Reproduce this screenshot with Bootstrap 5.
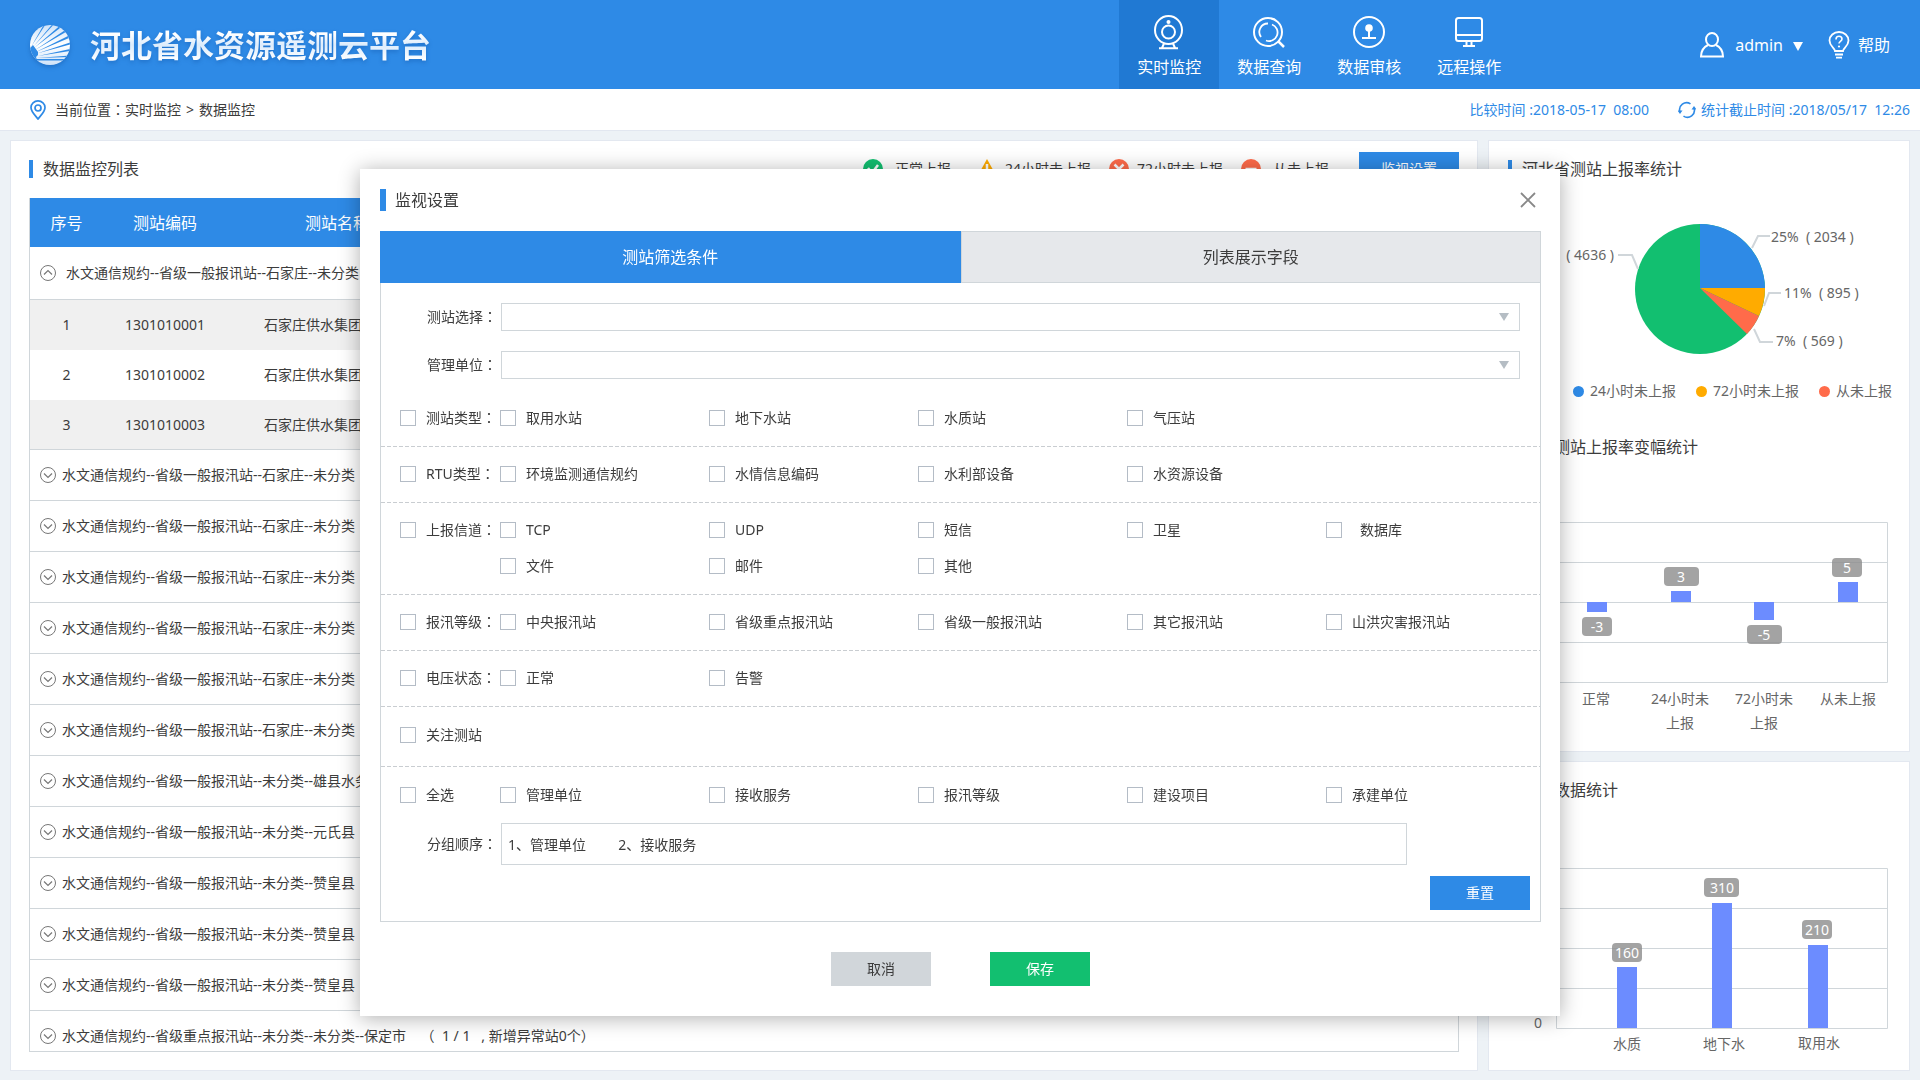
<!DOCTYPE html>
<html lang="zh-CN">
<head>
<meta charset="utf-8">
<meta name="viewport" content="width=device-width, initial-scale=1">
<title>河北省水资源遥测云平台</title>
<link href="https://cdn.jsdelivr.net/npm/bootstrap@5.3.0/dist/css/bootstrap.min.css" rel="stylesheet">
<style>
:root{--blue:#2e8ae6;--line:#d0d6da;--ink:#3c3c3c;--soft:#666}
body{font-family:"Noto Sans","Noto Sans CJK SC",sans-serif;font-size:14px;line-height:20px;color:var(--ink);background:#edf2f6;height:100vh;min-height:700px;overflow:hidden}
svg{display:block;flex:none}
button{font-family:inherit}
.colon{font-family:"Noto Sans CJK TC",sans-serif;line-height:1}
/* header */
.topbar{background:var(--blue);color:#fff;height:89px}
.brand{padding-left:30px;gap:20px}
.brand-name{font-size:31px;line-height:44px;font-weight:700;background:linear-gradient(#fff 25%,#dcecfc 50%,#fff 85%);-webkit-background-clip:text;background-clip:text;color:transparent;filter:drop-shadow(0 2px 2px rgba(10,70,150,.35))}
.brand svg{filter:drop-shadow(0 2px 2px rgba(10,70,150,.35))}
.top-link{width:100px;height:89px;padding-top:14px;color:#fff;font-size:16px;line-height:24px;text-decoration:none;gap:5px}
.top-link:hover{color:#fff}
.top-link.active{background:#2079d3}
.user-area{font-size:16px;line-height:24px;margin-left:180px;padding-right:30px;gap:25px}
.user-area a,.user-area button{color:#fff;text-decoration:none;background:none;border:0;padding:0}
.user-area button{gap:10px}
.user-area a{gap:8px}
.subbar{background:#fff;height:42px;border-bottom:1px solid #e2e7f0;padding:0 10px 0 30px;gap:9px}
.crumbs a,.crumbs span{color:var(--ink);text-decoration:none}
.crumbs .sep{margin:0 5px}
.times{color:var(--blue)}
.times svg{margin:0 5px 0 29px}
/* panels */
.page-main{gap:10px;padding:9px 10px;min-height:0}
.panel{background:#fff;border:1px solid #e3e8f0}
.side-col{width:422px;gap:9px}
.bar-title{display:flex;align-items:center;font-size:16px;line-height:24px;margin:0;font-weight:400;gap:10px}
.bar-title::before{content:"";width:4px;height:18px;background:var(--blue)}
.list-panel{padding:11px 18px 18px}
.side-panel{padding:16px 0 0}
.side-panel .bar-title{padding-left:19px}
.pie-legend + .bar-title{margin-top:34px}
.btn-flat{border:0;border-radius:0;width:100px;height:34px;font-size:14px;line-height:20px;padding:0;color:#fff}
.btn-blue,.btn-blue:hover{background:var(--blue);color:#fff}
.btn-grey,.btn-grey:hover{background:#d1d6da;color:var(--ink)}
.btn-green,.btn-green:hover{background:#12bf70;color:#fff}
.states{gap:18px;margin-right:30px}
.states .st{display:flex;align-items:center;gap:8px}
.states .st.short{gap:12px}
/* station table */
.table-wrap{margin-top:12px;border:1px solid var(--line);border-top:0;overflow:hidden;min-height:0}
.stations{width:100%;border-collapse:separate;border-spacing:0;table-layout:fixed;white-space:nowrap}
.stations th{height:49px;background:var(--blue);color:#fff;font-size:16px;font-weight:400;text-align:center;padding:0}
.stations td{padding:0;text-align:center}
.stations .grp td{height:51px;border-bottom:1px solid var(--line);text-align:left;padding-left:9px}
.stations .grp.open td{height:53px}
.stations .grp div{display:flex;align-items:center;gap:5px}
.stations .grp.open div{gap:9px}
.stations .grp button{border:0;background:none;padding:0;color:#777}
.stations .item td{height:50px}
.stations .item.odd td{background:#f0f0f0}
.stations .item.last td{border-bottom:1px solid var(--line)}
.stations .item td.name{text-align:left;padding-left:37px}
.c-no{width:73px}
.c-code{width:124px}
.c-name{width:220px}
/* legend */
.pie-legend{color:var(--soft);gap:20px;padding-right:17px}
.pie-legend span{display:flex;align-items:center;gap:6px;white-space:nowrap}
.pie-legend i{width:11px;height:11px;border-radius:50%}
.pie-legend .late24{background:#2e8ae6}
.pie-legend .late72{background:#ffab00}
.pie-legend .never{background:#ff6b4a}
.chart{width:100%;height:auto}
.chart text{font-size:14px;fill:var(--soft)}
.chart .tag{fill:#fff;text-anchor:middle}
.chart .mid{text-anchor:middle}
/* dialog */
.monitor-modal .modal-dialog{max-width:1200px;margin:169px auto 0}
.monitor-modal .modal-content{border:0;border-radius:0;box-shadow:0 2px 20px rgba(0,0,0,.32);padding:19px 19px 30px 20px;color:var(--ink)}
.dlg-title{gap:9px}
.dlg-title::before{width:6px;height:22px}
.dlg-close{border:0;background:none;padding:0;margin-right:5px}
.dlg-tabs{margin-top:19px}
.dlg-tabs button{flex:1;height:52px;border:1px solid var(--line);background:#e6e8eb;color:var(--ink);font-size:16px;line-height:24px;padding:0}
.dlg-tabs button.active{background:var(--blue);border-color:var(--blue);color:#fff}
.dlg-box{border:1px solid var(--line);border-top:0;padding:20px 0 11px}
.field-row{display:grid;grid-template-columns:74px 1fr;align-items:center;padding:0 20px 0 46px}
.field-row label{height:20px;white-space:nowrap}
.field-row select{height:28px;border:1px solid var(--line);border-radius:0;padding:0 10px;font-size:14px;background:#fff url("data:image/svg+xml,%3Csvg xmlns='http://www.w3.org/2000/svg' width='10' height='8'%3E%3Cpath d='M0 0h10L5 8z' fill='%23b5bdc4'/%3E%3C/svg%3E") no-repeat right 10px center;background-size:10px 8px}
.order-row{padding-right:133px}
.order-row input{height:42px;border:1px solid var(--line);border-radius:0;padding:0 6px;font-size:14px;color:var(--ink)}
.selects{gap:20px;margin-bottom:12px}
.opts{display:grid;grid-template-columns:100px 209fr 209fr 209fr 199fr 204fr;row-gap:16px;padding:17px 10px 19px 19px;background:repeating-linear-gradient(90deg,#c9cdd1 0 4px,transparent 4px 6px) no-repeat left bottom/100% 1px}
.opts.watch{padding:18px 10px 22px 19px}
.opts.all{padding:18px 10px 18px 19px;background:none}
.opts label{display:flex;align-items:center;gap:10px;height:20px;white-space:nowrap}
.opts .form-check-input{width:16px;height:16px;margin:0;border:1px solid #b4bcc6;border-radius:0;flex:none}
.opts .second{grid-column-start:2}
.reset-row{padding:11px 10px 0 0}
.dlg-foot{gap:59px;margin-top:30px}
</style>
<script src="https://cdn.jsdelivr.net/npm/bootstrap@5.3.0/dist/js/bootstrap.bundle.min.js"></script>
</head>
<body class="d-flex flex-column">
<svg width="0" height="0" class="position-absolute" aria-hidden="true">
  <symbol id="down" viewBox="0 0 18 18"><circle cx="9" cy="9" r="7.5" fill="none" stroke="currentColor"/><path d="M5 7.500l4 4 4-4" fill="none" stroke="currentColor" stroke-width="1.200"/></symbol>
  <symbol id="up" viewBox="0 0 18 18"><circle cx="9" cy="9" r="7.5" fill="none" stroke="currentColor"/><path d="M5 10.500l4-4 4 4" fill="none" stroke="currentColor" stroke-width="1.200"/></symbol>
</svg>

<header class="topbar d-flex align-items-center flex-shrink-0">
  <div class="brand d-flex align-items-center me-auto">
    <svg width="40" height="40" viewBox="0 0 40 40">
      <defs><linearGradient id="lg" x1="0" y1="0" x2="0" y2="1"><stop offset="0" stop-color="#cfe3f9"/><stop offset=".5" stop-color="#fff"/><stop offset="1" stop-color="#cfe3f9"/></linearGradient><clipPath id="cc"><circle cx="20" cy="20" r="20"/></clipPath></defs>
      <g clip-path="url(#cc)"><rect width="40" height="40" fill="url(#lg)"/>
      <g fill="#2e8ae6"><path d="M-1 24L3 20 8 27 8 30 6 32 7 35-1 38z"/><path d="M1 22L14.200-1 15.800-1z"/><path d="M3 22L22.500-1 24.200-1z"/><path d="M4 23L29.500 1 31 2.200z"/><path d="M5 25L34.500 5.500 35.800 7z"/><path d="M6 27L38 11 39 13z"/><path d="M7 28.500L40 17.500 40 19.500z"/><path d="M8 31L40 24 40 26z"/><path d="M7 33L40 30.500 40 32z"/><path d="M6 34h34v1.600H6z"/></g></g>
    </svg>
    <span class="brand-name">河北省水资源遥测云平台</span>
  </div>
  <nav class="d-flex">
    <a href="#" class="top-link active d-flex flex-column align-items-center">
      <svg width="36" height="36" viewBox="0 0 36 36" fill="none" stroke="#fff" stroke-width="2"><ellipse cx="17.500" cy="16" rx="13.500" ry="14"/><circle cx="17.500" cy="18" r="6.500"/><circle cx="17.500" cy="8" r="2" fill="#fff" stroke="none"/><path d="M13 29.500l-2 4.500M22 29.500l2 4.500M8 34.300h19"/></svg>实时监控</a>
    <a href="#" class="top-link d-flex flex-column align-items-center">
      <svg width="36" height="36" viewBox="0 0 36 36" fill="none" stroke="#fff" stroke-width="2"><circle cx="17" cy="18" r="14"/><path d="M27 27l6 6" stroke-width="2.500"/><path d="M17 9.500a8.500 8.500 0 0 0-7 13.500M21 10.500a8.500 8.500 0 0 1-6 16" stroke-width="1.800"/></svg>数据查询</a>
    <a href="#" class="top-link d-flex flex-column align-items-center">
      <svg width="36" height="36" viewBox="0 0 36 36" fill="none" stroke="#fff" stroke-width="2"><circle cx="18" cy="18" r="15"/><circle cx="18" cy="14" r="3.800" fill="#fff" stroke="none"/><path d="M18 15v9M11 24h14"/></svg>数据审核</a>
    <a href="#" class="top-link d-flex flex-column align-items-center">
      <svg width="36" height="36" viewBox="0 0 36 36" fill="none" stroke="#fff" stroke-width="2"><rect x="5" y="4" width="26" height="23" rx="2.500"/><path d="M5 21h26M15.500 27v4.500M20.500 27v4.500M12 32h12"/></svg>远程操作</a>
  </nav>
  <div class="user-area d-flex align-items-center">
    <button type="button" class="d-flex align-items-center">
      <svg width="26" height="26" viewBox="0 0 26 26" fill="none" stroke="#fff" stroke-width="2"><ellipse cx="13" cy="7.500" rx="6" ry="6.500"/><path d="M9 13C4 15.500 2 19 2 24.500h22C24 19 22 15.500 17 13"/></svg>
      admin
      <svg class="mt-1" width="10" height="9" viewBox="0 0 10 9"><path d="M0 0h10L5 9z" fill="#fff"/></svg>
    </button>
    <a href="#" class="d-flex align-items-center">
      <svg width="22" height="28" viewBox="0 0 22 28" fill="none" stroke="#fff" stroke-width="1.800"><path d="M7 20c0-3-5.500-4.500-5.500-10.500a9.500 8.500 0 0 1 19 0C20.500 15.500 15 17 15 20z"/><path d="M7 23.500h8M8 26.700h6"/><path d="M8 8.500c0-4.500 6-4 6-.5 0 2.300-3 2.300-3 4.500" stroke-width="1.600"/><circle cx="11" cy="15.500" r="1.100" fill="#fff" stroke="none"/></svg>帮助</a>
  </div>
</header>

<div class="subbar d-flex align-items-center flex-shrink-0">
  <svg width="16" height="20" viewBox="0 0 16 20" fill="none" stroke="#2e8ae6" stroke-width="1.700"><path d="M8 19C5.500 15.500 1 12 1 7.500a7 6.600 0 0 1 14 0C15 12 10.500 15.500 8 19z"/><circle cx="8" cy="8" r="3"/></svg>
  <div class="crumbs me-auto"><span>当前位置<span class="colon" lang="zh-TW">：</span></span><a href="#">实时监控</a><span class="sep">&gt;</span><a href="#">数据监控</a></div>
  <div class="times d-flex align-items-center">
    <span>比较时间 :2018-05-17&nbsp; 08:00</span>
    <svg width="18" height="18" viewBox="0 0 18 18" fill="none" stroke="#2e8ae6" stroke-width="1.600"><path d="M2 11A7 7 0 0 1 12.500 2.900M5.500 15.100A7 7 0 0 0 16 7"/><path d="M-.5 9.500h5L2 13zM13.500 8.500h5L16 5z" fill="#2e8ae6" stroke="none"/></svg>
    <span>统计截止时间 :2018/05/17&nbsp; 12:26</span>
  </div>
</div>

<main class="page-main d-flex flex-grow-1">
  <section class="panel list-panel d-flex flex-column flex-grow-1">
    <div class="d-flex align-items-center">
      <h2 class="bar-title me-auto">数据监控列表</h2>
      <div class="states d-flex">
        <span class="st short me-2"><svg width="20" height="20" viewBox="0 0 20 20"><circle cx="10" cy="10" r="10" fill="#12bf70"/><path d="M5 9l4 5 6-8" fill="none" stroke="#fff" stroke-width="2.500"/></svg>正常上报</span>
        <span class="st"><svg width="20" height="20" viewBox="0 0 20 20"><path d="M10 0l10 18H0z" fill="#ffab00"/><path d="M10 5v8M10 15v2" stroke="#fff" stroke-width="2.500"/></svg>24小时未上报</span>
        <span class="st"><svg width="20" height="20" viewBox="0 0 20 20"><circle cx="10" cy="10" r="10" fill="#ff6b4a"/><path d="M5.500 5.500l9 9M14.500 5.500l-9 9" stroke="#fff" stroke-width="2.500"/></svg>72小时未上报</span>
        <span class="st short"><svg width="20" height="20" viewBox="0 0 20 20"><circle cx="10" cy="10" r="10" fill="#ff6b4a"/><path d="M4.500 10h11" stroke="#fff" stroke-width="2.500"/></svg>从未上报</span>
      </div>
      <button type="button" class="btn btn-flat btn-blue">监视设置</button>
    </div>
    <div class="table-wrap flex-grow-1">
      <table class="stations">
        <colgroup><col class="c-no"><col class="c-code"><col class="c-name"><col></colgroup>
        <thead><tr><th>序号</th><th>测站编码</th><th>测站名称</th><th></th></tr></thead>
        <tbody>
        <tr class="grp open"><td colspan="4"><div><button type="button" aria-label="收起"><svg width="18" height="18"><use href="#up"/></svg></button>水文通信规约--省级一般报讯站--石家庄--未分类</div></td></tr>
        <tr class="item odd"><td>1</td><td>1301010001</td><td class="name">石家庄供水集团</td><td></td></tr>
        <tr class="item"><td>2</td><td>1301010002</td><td class="name">石家庄供水集团</td><td></td></tr>
        <tr class="item odd last"><td>3</td><td>1301010003</td><td class="name">石家庄供水集团</td><td></td></tr>
        <tr class="grp"><td colspan="4"><div><button type="button" aria-label="展开"><svg width="18" height="18"><use href="#down"/></svg></button>水文通信规约--省级一般报汛站--石家庄--未分类</div></td></tr>
        <tr class="grp"><td colspan="4"><div><button type="button" aria-label="展开"><svg width="18" height="18"><use href="#down"/></svg></button>水文通信规约--省级一般报汛站--石家庄--未分类</div></td></tr>
        <tr class="grp"><td colspan="4"><div><button type="button" aria-label="展开"><svg width="18" height="18"><use href="#down"/></svg></button>水文通信规约--省级一般报汛站--石家庄--未分类</div></td></tr>
        <tr class="grp"><td colspan="4"><div><button type="button" aria-label="展开"><svg width="18" height="18"><use href="#down"/></svg></button>水文通信规约--省级一般报汛站--石家庄--未分类</div></td></tr>
        <tr class="grp"><td colspan="4"><div><button type="button" aria-label="展开"><svg width="18" height="18"><use href="#down"/></svg></button>水文通信规约--省级一般报汛站--石家庄--未分类</div></td></tr>
        <tr class="grp"><td colspan="4"><div><button type="button" aria-label="展开"><svg width="18" height="18"><use href="#down"/></svg></button>水文通信规约--省级一般报汛站--石家庄--未分类</div></td></tr>
        <tr class="grp"><td colspan="4"><div><button type="button" aria-label="展开"><svg width="18" height="18"><use href="#down"/></svg></button>水文通信规约--省级一般报汛站--未分类--雄县水务局</div></td></tr>
        <tr class="grp"><td colspan="4"><div><button type="button" aria-label="展开"><svg width="18" height="18"><use href="#down"/></svg></button>水文通信规约--省级一般报汛站--未分类--元氏县</div></td></tr>
        <tr class="grp"><td colspan="4"><div><button type="button" aria-label="展开"><svg width="18" height="18"><use href="#down"/></svg></button>水文通信规约--省级一般报汛站--未分类--赞皇县</div></td></tr>
        <tr class="grp"><td colspan="4"><div><button type="button" aria-label="展开"><svg width="18" height="18"><use href="#down"/></svg></button>水文通信规约--省级一般报汛站--未分类--赞皇县</div></td></tr>
        <tr class="grp"><td colspan="4"><div><button type="button" aria-label="展开"><svg width="18" height="18"><use href="#down"/></svg></button>水文通信规约--省级一般报汛站--未分类--赞皇县</div></td></tr>
        <tr class="grp"><td colspan="4"><div><button type="button" aria-label="展开"><svg width="18" height="18"><use href="#down"/></svg></button><span>水文通信规约--省级重点报汛站--未分类--未分类--保定市&nbsp;&nbsp;&nbsp;&nbsp;（&nbsp; 1 / 1 &nbsp;&nbsp;, 新增异常站0个）</span></div></td></tr>
        </tbody>
      </table>
    </div>
  </section>

  <aside class="side-col d-flex flex-column flex-shrink-0">
    <section class="panel side-panel flex-grow-1">
      <h2 class="bar-title">河北省测站上报率统计</h2>
      <svg class="chart" viewBox="0 0 420 200" role="img" aria-label="测站上报率饼图">
        <!-- centre 211,108 radius 65 -->
        <circle cx="211" cy="108" r="65" fill="#12bf70"/>
        <path d="M211 107V43A65 65 0 0 1 276 107z" fill="#2e8ae6"/>
        <path d="M211 107H276A65 65 0 0 1 270 135z" fill="#ffab00"/>
        <path d="M211 107L270 135A65 65 0 0 1 258 153z" fill="#ff6b4a"/>
        <g fill="none" stroke="#d0d6da" stroke-width="2"><path d="M129 74h14l6 14M281 55h-12l-6 12M292 112h-12l-5 13M284 161h-13l-6-13"/></g>
        <text x="125" y="79" text-anchor="end">57%&nbsp; ( 4636 )</text>
        <text x="282" y="61">25%&nbsp; ( 2034 )</text>
        <text x="295" y="117">11%&nbsp; ( 895 )</text>
        <text x="287" y="165">7%&nbsp; ( 569 )</text>
      </svg>
      <div class="pie-legend d-flex justify-content-end">
        <span><i class="late24"></i>24小时未上报</span>
        <span><i class="late72"></i>72小时未上报</span>
        <span><i class="never"></i>从未上报</span>
      </div>
      <h2 class="bar-title">河北测站上报率变幅统计</h2>
      <svg class="chart" viewBox="0 0 420 280" role="img" aria-label="上报率变幅柱状图">
        <!-- zero line at y=143, 40px per gridline -->
        <path d="M67.500 63.500h331v160h-331zM67 103.500h331M67 143.500h331M67 183.500h331" fill="none" stroke="#d0d6da"/>
        <g fill="#6c8cff"><path d="M98 143h20v10H98zM182 132h20v11h-20zM265 143h20v18h-20zM349 123h20v20h-20z"/></g>
        <g fill="#8c8c8c" fill-opacity=".8"><rect x="93" y="158" width="30" height="19" rx="4"/><rect x="175" y="108" width="35" height="19" rx="4"/><rect x="258" y="166" width="35" height="19" rx="4"/><rect x="343" y="99" width="30" height="19" rx="4"/></g>
        <text class="tag" x="108" y="173">-3</text><text class="tag" x="192" y="123">3</text><text class="tag" x="275" y="181">-5</text><text class="tag" x="358" y="114">5</text>
        <text class="mid" x="107" y="245">正常</text>
        <text class="mid" x="191" y="245">24小时未</text><text class="mid" x="191" y="269">上报</text>
        <text class="mid" x="275" y="245">72小时未</text><text class="mid" x="275" y="269">上报</text>
        <text class="mid" x="359" y="245">从未上报</text>
      </svg>
    </section>
    <section class="panel side-panel">
      <h2 class="bar-title">测站数据统计</h2>
      <svg class="chart" viewBox="0 0 420 268" role="img" aria-label="测站数据柱状图">
        <path d="M67.500 66.500h331v160h-331zM67 106.500h331M67 146.500h331M67 186.500h331" fill="none" stroke="#d0d6da"/>
        <g fill="#6c8cff"><path d="M128 165h20v61h-20zM223 101h20v125h-20zM319 143h20v83h-20z"/></g>
        <g fill="#8c8c8c" fill-opacity=".8"><rect x="123" y="141" width="30" height="19" rx="4"/><rect x="215" y="76" width="35" height="19" rx="4"/><rect x="313" y="118" width="30" height="19" rx="4"/></g>
        <text class="tag" x="138" y="156">160</text><text class="tag" x="233" y="91">310</text><text class="tag" x="328" y="133">210</text>
        <text x="45" y="226">0</text>
        <text class="mid" x="138" y="247">水质</text><text class="mid" x="235" y="247">地下水</text><text class="mid" x="330" y="246">取用水</text>
      </svg>
    </section>
  </aside>
</main>

<div class="modal monitor-modal d-block" tabindex="-1" role="dialog" aria-labelledby="dlgTitle">
  <div class="modal-dialog">
    <div class="modal-content">
      <div class="d-flex align-items-center">
        <h1 class="bar-title dlg-title me-auto" id="dlgTitle">监视设置</h1>
        <button type="button" class="dlg-close" aria-label="关闭"><svg width="16" height="16" viewBox="0 0 16 16" stroke="#888" stroke-width="1.800"><path d="M1 1l14 14M15 1L1 15"/></svg></button>
      </div>
      <div class="dlg-tabs d-flex" role="tablist">
        <button type="button" class="active" role="tab" aria-selected="true">测站筛选条件</button>
        <button type="button" role="tab" aria-selected="false">列表展示字段</button>
      </div>
      <form class="dlg-box">
        <div class="selects d-flex flex-column">
          <div class="field-row"><label for="station">测站选择<span class="colon" lang="zh-TW">：</span></label><select id="station" class="form-select"><option></option></select></div>
          <div class="field-row"><label for="unit">管理单位<span class="colon" lang="zh-TW">：</span></label><select id="unit" class="form-select"><option></option></select></div>
        </div>
        <div class="opts">
          <label><input type="checkbox" class="form-check-input"><span>测站类型<span class="colon" lang="zh-TW">：</span></span></label>
          <label><input type="checkbox" class="form-check-input">取用水站</label>
          <label><input type="checkbox" class="form-check-input">地下水站</label>
          <label><input type="checkbox" class="form-check-input">水质站</label>
          <label><input type="checkbox" class="form-check-input">气压站</label>
        </div>
        <div class="opts">
          <label><input type="checkbox" class="form-check-input"><span>RTU类型<span class="colon" lang="zh-TW">：</span></span></label>
          <label><input type="checkbox" class="form-check-input">环境监测通信规约</label>
          <label><input type="checkbox" class="form-check-input">水情信息编码</label>
          <label><input type="checkbox" class="form-check-input">水利部设备</label>
          <label><input type="checkbox" class="form-check-input">水资源设备</label>
        </div>
        <div class="opts">
          <label><input type="checkbox" class="form-check-input"><span>上报信道<span class="colon" lang="zh-TW">：</span></span></label>
          <label><input type="checkbox" class="form-check-input">TCP</label>
          <label><input type="checkbox" class="form-check-input">UDP</label>
          <label><input type="checkbox" class="form-check-input">短信</label>
          <label><input type="checkbox" class="form-check-input">卫星</label>
          <label><input type="checkbox" class="form-check-input"><span class="ps-2">数据库</span></label>
          <label class="second"><input type="checkbox" class="form-check-input">文件</label>
          <label><input type="checkbox" class="form-check-input">邮件</label>
          <label><input type="checkbox" class="form-check-input">其他</label>
        </div>
        <div class="opts">
          <label><input type="checkbox" class="form-check-input"><span>报汛等级<span class="colon" lang="zh-TW">：</span></span></label>
          <label><input type="checkbox" class="form-check-input">中央报汛站</label>
          <label><input type="checkbox" class="form-check-input">省级重点报汛站</label>
          <label><input type="checkbox" class="form-check-input">省级一般报汛站</label>
          <label><input type="checkbox" class="form-check-input">其它报汛站</label>
          <label><input type="checkbox" class="form-check-input">山洪灾害报汛站</label>
        </div>
        <div class="opts">
          <label><input type="checkbox" class="form-check-input"><span>电压状态<span class="colon" lang="zh-TW">：</span></span></label>
          <label><input type="checkbox" class="form-check-input">正常</label>
          <label><input type="checkbox" class="form-check-input">告警</label>
        </div>
        <div class="opts watch">
          <label><input type="checkbox" class="form-check-input">关注测站</label>
        </div>
        <div class="opts all">
          <label><input type="checkbox" class="form-check-input">全选</label>
          <label><input type="checkbox" class="form-check-input">管理单位</label>
          <label><input type="checkbox" class="form-check-input">接收服务</label>
          <label><input type="checkbox" class="form-check-input">报汛等级</label>
          <label><input type="checkbox" class="form-check-input">建设项目</label>
          <label><input type="checkbox" class="form-check-input">承建单位</label>
        </div>
        <div class="field-row order-row"><label for="order">分组顺序<span class="colon" lang="zh-TW">：</span></label><input id="order" type="text" class="form-control" value="1、管理单位　&nbsp; &nbsp; &nbsp;2、接收服务"></div>
        <div class="reset-row d-flex justify-content-end"><button type="reset" class="btn btn-flat btn-blue">重置</button></div>
      </form>
      <div class="dlg-foot d-flex justify-content-center">
        <button type="button" class="btn btn-flat btn-grey">取消</button>
        <button type="button" class="btn btn-flat btn-green">保存</button>
      </div>
    </div>
  </div>
</div>
</body>
</html>
